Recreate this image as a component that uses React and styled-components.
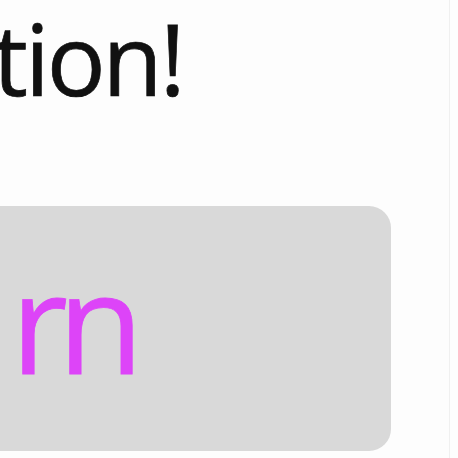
import styled, { createGlobalStyle } from 'styled-components';

const Global = createGlobalStyle`
  html, body {
    margin: 0;
    padding: 0;
    background: #fdfdfd;
    overflow: hidden;
  }
`;

const Screen = styled.div`
  width: 449px;
  height: 458px;
  border-right: 1px solid #f0f0f0;
  overflow: hidden;
  display: flex;
  flex-direction: column;
  font-family: 'Open Sans', 'Liberation Sans', sans-serif;
`;

const Title = styled.div`
  font-size: 98px;
  letter-spacing: -3px;
  line-height: 1;
  color: #111;
  -webkit-text-stroke: 0.7px #111;
  margin-left: -7px;
  margin-top: 9px;
  white-space: nowrap;
`;

const Card = styled.div`
  margin-top: 99px;
  margin-left: -30px;
  width: 421px;
  height: 245px;
  background: #d9d9d9;
  border-radius: 22px;
  display: flex;
  align-items: flex-start;
  padding-top: 44px;
  box-sizing: border-box;
`;

const Word = styled.span`
  font-size: 140px;
  letter-spacing: -10px;
  line-height: 1;
  color: #dd44f8;
  -webkit-text-stroke: 0.8px #dd44f8;
  margin-left: -46px;
  white-space: nowrap;
`;

const Lead = styled.span`
  margin-right: 18px;
`;

export default function App() {
  return (
    <>
      <Global />
      <Screen>
        <Title>tion!</Title>
        <Card>
          <Word>
            <Lead>e</Lead>rn
          </Word>
        </Card>
      </Screen>
    </>
  );
}
